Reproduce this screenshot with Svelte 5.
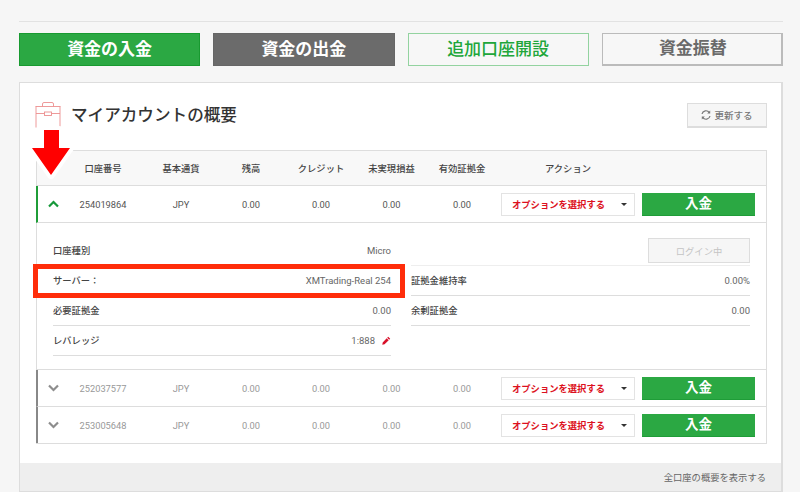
<script lang="ts">
  const tabs = [
    { label: '資金の入金', cls: 'tab-green' },
    { label: '資金の出金', cls: 'tab-grey' },
    { label: '追加口座開設', cls: 'tab-outline-green' },
    { label: '資金振替', cls: 'tab-outline-grey' }
  ];
  const headers = ['口座番号', '基本通貨', '残高', 'クレジット', '未実現損益', '有効証拠金'];
</script>

{#snippet accountRow(id: string, open: boolean)}
  <div class="cols row" class:open>
    <span class="chevron">
      <svg width="11" height="8" viewBox="0 0 11 8">
        <polyline points={open ? '1,6.5 5.5,2 10,6.5' : '1,1.5 5.5,6 10,1.5'} />
      </svg>
    </span>
    <span>{id}</span>
    <span>JPY</span>
    <span>0.00</span>
    <span>0.00</span>
    <span>0.00</span>
    <span>0.00</span>
    <div class="actions">
      <div class="select">オプションを選択する<i class="caret"></i></div>
      <button type="button" class="deposit">入金</button>
    </div>
  </div>
{/snippet}

<div class="page">
  <hr class="top-rule" />

  <div class="tabs">
    {#each tabs as tab}
      <button type="button" class="tab {tab.cls}">{tab.label}</button>
    {/each}
  </div>

  <section class="panel">
    <div class="panel-body">
      <div class="title-row">
        <svg class="case" width="26" height="26" viewBox="0 0 26 26">
          <path d="M0.500 4.500H25.500M1 4.500V25.500M25 4.500V25.500M7.500 4.500V2Q7.500 0.500 9 0.500H17Q18.500 0.500 18.500 2V4.500M1 11.500H9.500M16.500 11.500H25" />
          <rect x="9.500" y="10" width="7" height="3.500" />
        </svg>
        <h2>マイアカウントの概要</h2>
        <button type="button" class="refresh">
          <svg width="10" height="10" viewBox="0 0 10 10">
            <path d="M1 4A4 4 0 0 1 8.300 2.600M9 6A4 4 0 0 1 1.700 7.400" />
            <path class="tip" d="M9.200 0.600V3.600H6.200ZM0.800 9.400V6.400H3.800Z" />
          </svg>
          更新する
        </button>
      </div>

      <div class="table">
        <div class="cols head">
          <span></span>
          {#each headers as h}<span>{h}</span>{/each}
          <div class="action-head"><span>アクション</span></div>
        </div>

        {@render accountRow('254019864', true)}

        <div class="detail">
          <div class="detail-col">
            <div class="item"><b>口座種別</b><span>Micro</span></div>
            <div class="item"><b>サーバー：</b><span>XMTrading-Real 254</span></div>
            <div class="item"><b>必要証拠金</b><span>0.00</span></div>
            <div class="item">
              <b>レバレッジ</b>
              <span class="leverage">
                1:888
                <svg width="9" height="9" viewBox="0 0 9 9">
                  <path d="M6.200 0.800L8.200 2.800L7.200 3.800L5.200 1.800ZM4.700 2.300L6.700 4.300L2.600 8.300L0.300 8.700L0.700 6.400Z" />
                </svg>
              </span>
            </div>
          </div>
          <div class="detail-col">
            <div class="item login-item"><button type="button" class="login" disabled>ログイン中</button></div>
            <div class="item"><b>証拠金維持率</b><span>0.00%</span></div>
            <div class="item"><b>余剰証拠金</b><span>0.00</span></div>
          </div>
        </div>

        {@render accountRow('252037577', false)}
        {@render accountRow('253005648', false)}
      </div>
    </div>

    <div class="panel-foot">全口座の概要を表示する</div>
  </section>

  <div class="highlight"></div>
  <svg class="arrow" width="50" height="58" viewBox="0 0 50 58">
    <polygon points="18,4 33,4 33,22 44,22 25,49 6,22 18,22" />
  </svg>
</div>

<style>
  :global(body) {
    background: #f6f6f6;
  }

  .page {
    position: relative;
    height: 492px;
    overflow: hidden;
    padding: 21px 17px 0 19px;
    box-sizing: border-box;
    font-family: Roboto, "Noto Sans CJK JP", sans-serif;
    font-size: 9.3px;
    color: #444;
  }

  .top-rule {
    margin: 0;
    border: 0;
    border-top: 1px solid #e2e2e2;
  }

  .tabs {
    display: grid;
    grid-template-columns: repeat(4, 1fr);
    gap: 13px;
    margin-top: 11px;
  }

  .tab {
    height: 33px;
    padding: 0 0 5px;
    font-family: inherit;
    font-size: 17px;
    font-weight: 700;
    box-sizing: border-box;
  }

  .tab-green {
    background: #2ba843;
    border: 1px solid #189a30;
    color: #fff;
  }

  .tab-grey {
    background: #6b6b6b;
    border: 1px solid #666;
    color: #fff;
  }

  .tab-outline-green {
    background: #f7f7f7;
    border: 1px solid #93d3a0;
    color: #20a63a;
    font-weight: 500;
  }

  .tab-outline-grey {
    background: #f7f7f7;
    border: 1px solid #bbb;
    border-right-width: 2px;
    border-bottom-width: 2px;
    color: #6a6a6a;
    padding-left: 2px;
  }

  .panel {
    margin-top: 16px;
    height: 410px;
    box-sizing: border-box;
    background: #fff;
    border: 1px solid #ddd;
    border-right-width: 2px;
    border-bottom-width: 1px;
    display: flex;
    flex-direction: column;
  }

  .panel-body {
    flex: 1;
    padding: 19px 14px 0 16px;
  }

  .title-row {
    display: flex;
    align-items: center;
    height: 26px;
    margin-bottom: 22px;
  }

  .case {
    margin-left: -1px;
    flex-shrink: 0;
  }

  .case path,
  .case rect {
    fill: none;
    stroke: #ec8f8f;
    stroke-width: 0.9;
  }

  h2 {
    margin: 0 0 3px 10px;
    flex: 1;
    font-size: 16.600px;
    font-weight: 500;
    color: #333;
  }

  .refresh {
    width: 80px;
    height: 25px;
    padding: 0;
    display: flex;
    align-items: center;
    justify-content: center;
    gap: 3px;
    font-family: inherit;
    font-size: 9.500px;
    font-weight: 500;
    color: #777;
    background: #f6f6f6;
    border: 1px solid #ddd;
    border-bottom-width: 2px;
  }

  .refresh path {
    fill: none;
    stroke: #777;
    stroke-width: 1.200;
  }

  .refresh path.tip {
    fill: #777;
    stroke: none;
  }

  .table {
    border: 1px solid #ddd;
  }

  .cols {
    display: grid;
    grid-template-columns: 23px 86px 70px 70px 70px 71px 70px 1fr;
    align-items: center;
    text-align: center;
  }

  .head {
    height: 34px;
    background: #f8f8f8;
    border-bottom: 1px solid #ddd;
    color: #444;
    font-weight: 500;
  }

  .action-head {
    padding-left: 4px;
  }

  .action-head span {
    display: block;
    width: 134px;
  }

  .row {
    height: 37px;
    box-sizing: border-box;
    grid-template-columns: 22px 86px 70px 70px 70px 71px 70px 1fr;
    border-left: 2px solid #888;
    border-bottom: 1px solid #ddd;
    margin-left: -1px;
    color: #999;
  }

  .row:last-child {
    border-bottom: 0;
    height: 36px;
  }

  .row.open {
    border-left-color: #1f9d38;
    color: #555;
  }

  .chevron {
    display: flex;
    justify-content: flex-end;
  }

  .chevron svg {
    margin-right: 1px;
  }

  .chevron polyline {
    fill: none;
    stroke: #8d8d8d;
    stroke-width: 2.200;
  }

  .open .chevron polyline {
    stroke: #16983a;
  }

  .actions {
    display: flex;
    gap: 7px;
    padding-left: 4px;
  }

  .select {
    width: 134px;
    height: 23px;
    box-sizing: border-box;
    display: flex;
    align-items: center;
    justify-content: space-between;
    padding: 0 7px 0 10px;
    background: #fff;
    border: 1px solid #e3e3e3;
    color: #dc1020;
    font-weight: 700;
  }

  .caret {
    width: 0;
    height: 0;
    border-left: 3px solid transparent;
    border-right: 3px solid transparent;
    border-top: 3px solid #333;
  }

  .deposit {
    width: 113px;
    height: 23px;
    padding: 0;
    background: #2ba843;
    border: 0;
    border-bottom: 1px solid #1f9c38;
    color: #fff;
    font-family: inherit;
    font-size: 13.500px;
    font-weight: 700;
    line-height: 1;
  }

  .detail {
    height: 147px;
    box-sizing: border-box;
    padding: 13px 16px 0;
    display: grid;
    grid-template-columns: 338px 1fr;
    gap: 20px;
    border-bottom: 1px solid #ddd;
  }

  .item {
    height: 30px;
    box-sizing: border-box;
    display: flex;
    align-items: center;
    justify-content: space-between;
    padding-bottom: 1px;
    border-bottom: 1px solid #ddd;
    color: #666;
  }

  .item span {
    font-size: 9.500px;
  }

  .item b {
    font-weight: 500;
    color: #444;
  }

  .login-item {
    justify-content: flex-end;
    padding-bottom: 0;
    border-bottom-color: #eee;
  }

  .login {
    width: 102px;
    height: 25px;
    padding: 0;
    font-family: inherit;
    font-size: 9.300px;
    color: #c4c4c4;
    background: #f6f6f6;
    border: 1px solid #ddd;
  }

  .leverage {
    display: flex;
    align-items: center;
    gap: 7px;
  }

  .leverage path {
    fill: #d8102a;
  }

  .panel-foot {
    height: 28px;
    flex-shrink: 0;
    box-sizing: border-box;
    display: flex;
    align-items: center;
    justify-content: flex-end;
    padding-right: 15px;
    background: #eee;
    color: #666;
  }

  .highlight {
    position: absolute;
    left: 33px;
    top: 264px;
    width: 372px;
    height: 34px;
    box-sizing: border-box;
    border: 5px solid #ff2d0a;
  }

  .arrow {
    position: absolute;
    left: 26px;
    top: 126px;
    overflow: visible;
  }

  .arrow polygon {
    fill: #ff0000;
    stroke: #fff;
    stroke-width: 8;
    stroke-linejoin: round;
    paint-order: stroke;
  }
</style>
